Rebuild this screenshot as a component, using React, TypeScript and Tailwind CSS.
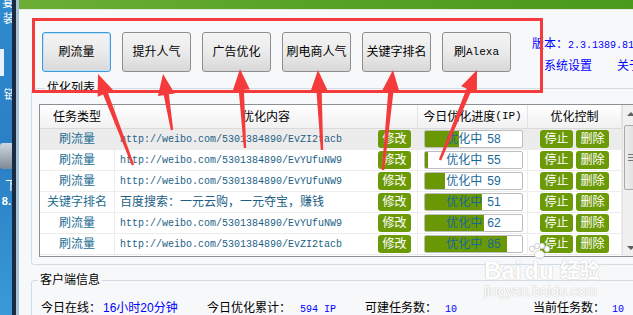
import React from 'react';

type Row = {
    type: string;
    content: string;
    url: boolean;
    fill: number;
    val: number;
    sel?: boolean;
};

const rows: Row[] = [
    { type: '刷流量', content: 'http://weibo.com/5301384890/EvZI2tacb', url: true, fill: 34, val: 58, sel: true },
    { type: '刷流量', content: 'http://weibo.com/5301384890/EvYUfuNW9', url: true, fill: 3, val: 55 },
    { type: '刷流量', content: 'http://weibo.com/5301384890/EvYUfuNW9', url: true, fill: 20, val: 59 },
    { type: '关键字排名', content: '百度搜索：一元云购，一元夺宝，赚钱', url: false, fill: 57, val: 51 },
    { type: '刷流量', content: 'http://weibo.com/5301384890/EvYUfuNW9', url: true, fill: 59, val: 62 },
    { type: '刷流量', content: 'http://weibo.com/5301384890/EvZI2tacb', url: true, fill: 82, val: 85 },
];

const buttons = ['刷流量', '提升人气', '广告优化', '刷电商人气', '关键字排名'];

// tail x,y -> tip x,y
const arrows = [
    [133, 165, 98, 74],
    [172, 130, 163, 74],
    [245, 148, 240, 69],
    [322, 150, 318, 70],
    [383, 170, 393, 70],
    [440, 160, 477, 70],
];

function arrowPoints(x1: number, y1: number, x2: number, y2: number) {
    const len = Math.hypot(x2 - x1, y2 - y1);
    const dx = (x2 - x1) / len;
    const dy = (y2 - y1) / len;
    const nx = -dy;
    const ny = dx;
    const bx = x2 - dx * 21;
    const by = y2 - dy * 21;
    const p = (x: number, y: number, w: number) => `${x + nx * w},${y + ny * w}`;
    return [
        p(x1, y1, 1.2),
        p(bx, by, 2.6),
        p(bx, by, 8.5),
        `${x2},${y2}`,
        p(bx, by, -8.5),
        p(bx, by, -2.6),
        p(x1, y1, -1.2),
    ].join(' ');
}

function GreenBtn({ label }: { label: string }) {
    return (
        <div className="w-[33px] h-[18px] rounded-[3px] bg-[#6c9a06] text-white text-[12px] leading-[18px] text-center">
            {label}
        </div>
    );
}

export default function App() {
    return (
        <div className="relative w-[633px] h-[315px] overflow-hidden flex bg-[#f7f8f9] text-black font-['Liberation_Sans','Noto_Sans_CJK_SC',sans-serif]">
            {/* desktop strip */}
            <div className="w-[19px] shrink-0 flex">
                <div className="relative w-[12px] bg-linear-to-b from-[#2f8ad0] via-[#2a7fc4] to-[#3a9ad8] overflow-hidden text-white text-[12px] leading-[14px]">
                    <span className="absolute right-[-2px] top-[-4px]">宴</span>
                    <span className="absolute right-[-3px] top-[12px]">装</span>
                    <div className="absolute left-0 top-[49px] w-[4px] h-[27px] bg-[#e8f2fa]" />
                    <span className="absolute right-[-4px] top-[88px]">链</span>
                    <div className="absolute left-0 top-[143px] w-[12px] h-[26px] bg-linear-to-b from-[#cfd8e0] to-[#7e8a96] rounded-l-[3px]" />
                    <span className="absolute right-[-5px] top-[179px]">下</span>
                    <span className="absolute right-[1px] top-[194px] text-[11px] font-bold">8.</span>
                </div>
                <div className="w-[4px] bg-[#182b42]" />
                <div className="w-[3px] bg-[#a8c2d8]" />
            </div>

            {/* app window */}
            <div className="flex-1 flex flex-col min-w-0">
                <div className="shrink-0 h-[9px] bg-linear-to-r from-[#6cae36] via-[#55a226] to-[#4a9a1c]" />
                <div className="shrink-0 h-[1px] bg-[#e4e9e1]" />

                {/* toolbar */}
                <div className="shrink-0 h-[70px] flex items-start pt-[22px] pl-[23px]">
                    <div className="flex gap-[11px]">
                        {buttons.map((b, i) => (
                            <div
                                key={i}
                                className={`w-[69px] h-[40px] rounded-[3px] border flex items-center justify-center text-[12px] bg-linear-to-b from-[#f4f4f4] via-[#ebebeb] to-[#d8d8d8] ${i === 0 ? 'border-[#3c9bd8] shadow-[inset_0_0_0_1px_#bfe2f6]' : 'border-[#8e8e8e]'}`}
                            >
                                {b}
                            </div>
                        ))}
                        <div className="w-[69px] h-[40px] rounded-[3px] border border-[#8e8e8e] flex items-center justify-center text-[12px] bg-linear-to-b from-[#f4f4f4] via-[#ebebeb] to-[#d8d8d8]">
                            刷<span className="font-['Liberation_Mono',monospace] text-[11px]">Alexa</span>
                        </div>
                    </div>
                    <div className="ml-[21px] mt-[5px] text-[#0000ff] whitespace-nowrap">
                        <div className="text-[12px] leading-[14px]">
                            版本：<span className="font-['Liberation_Mono',monospace] text-[10px]">2.3.1389.81</span>
                        </div>
                        <div className="mt-[6px] pl-[12px] text-[12px] leading-[14px] flex gap-[25px]">
                            <span>系统设置</span>
                            <span>关于</span>
                        </div>
                    </div>
                </div>

                {/* task list group */}
                <fieldset className="shrink-0 ml-[12px] mr-[-30px] border border-[#d4dce3] rounded-[3px] pl-[7px] pt-[8px] pb-[7px]">
                    <legend className="ml-[6px] px-[2px] text-[12px] leading-[16px]">优化列表</legend>
                    <div className="flex border border-[#8c8f93] bg-white w-[602px]">
                        <div className="flex flex-col">
                            <div className="flex h-[24px] border-b border-[#dadada] bg-linear-to-b from-white to-[#f1f1f1] text-[12px]">
                                <div className="w-[75px] border-r border-[#e2e2e2] flex items-center justify-center">任务类型</div>
                                <div className="w-[303px] border-r border-[#e2e2e2] flex items-center justify-center">优化内容</div>
                                <div className="w-[110px] border-r border-[#e2e2e2] flex items-center justify-center">
                                    今日优化进度<span className="font-['Liberation_Mono',monospace] text-[11px]">(IP)</span>
                                </div>
                                <div className="w-[94px] border-r border-[#e2e2e2] flex items-center justify-center">优化控制</div>
                            </div>
                            {rows.map((r, i) => (
                                <div key={i} className={`flex h-[21px] border-b border-[#ececec] ${r.sel ? 'bg-[#ececec]' : 'bg-white'}`}>
                                    <div className="w-[75px] border-r border-[#ececec] flex items-center justify-center text-[12px] text-[#1c6c93]">
                                        {r.type}
                                    </div>
                                    <div className="w-[303px] border-r border-[#ececec] flex items-center pl-[5px] pr-[6px]">
                                        <span className={`flex-1 whitespace-nowrap text-[#1d5f86] ${r.url ? "font-['Liberation_Mono',monospace] text-[10px]" : 'text-[12px]'}`}>
                                            {r.content}
                                        </span>
                                        <GreenBtn label="修改" />
                                    </div>
                                    <div className="w-[110px] border-r border-[#ececec] flex items-center pl-[6px]">
                                        <div className="relative w-[99px] h-[18px] border border-[#bdbdbd] rounded-[2px] bg-white overflow-hidden">
                                            <div className="h-full bg-[#6a9804]" style={{ width: r.fill }} />
                                            <div className="absolute inset-0 flex items-center justify-center gap-[5px] text-[12px] text-[#17689a]">
                                                <span>优化中</span>
                                                <span>{r.val}</span>
                                            </div>
                                        </div>
                                    </div>
                                    <div className="w-[94px] border-r border-[#ececec] flex items-center justify-center gap-[3px]">
                                        <GreenBtn label="停止" />
                                        <GreenBtn label="删除" />
                                    </div>
                                </div>
                            ))}
                            <div className="h-[1px]" />
                        </div>
                        {/* scrollbar */}
                        <div className="w-[17px] bg-[#f0f0f0] border-l border-[#e3e3e3] flex flex-col justify-between items-center">
                            <div className="w-full">
                                <div className="h-[17px] flex items-center justify-center">
                                    <div className="w-0 h-0 border-l-[4px] border-r-[4px] border-b-[4px] border-l-transparent border-r-transparent border-b-[#606060]" />
                                </div>
                                <div className="mt-[3px] mx-[1px] h-[65px] rounded-[2px] border border-[#a9a9a9] bg-linear-to-r from-[#eeeeee] to-[#dcdcdc] flex flex-col items-center justify-center gap-[2px]">
                                    <div className="w-[7px] h-[1px] bg-[#777]" />
                                    <div className="w-[7px] h-[1px] bg-[#777]" />
                                    <div className="w-[7px] h-[1px] bg-[#777]" />
                                </div>
                            </div>
                            <div className="h-[17px] flex items-center justify-center">
                                <div className="w-0 h-0 border-l-[4px] border-r-[4px] border-t-[4px] border-l-transparent border-r-transparent border-t-[#606060]" />
                            </div>
                        </div>
                    </div>
                </fieldset>

                {/* client info group */}
                <fieldset className="shrink-0 mt-[7px] ml-[12px] mr-[-30px] h-[60px] border border-[#d4dce3] rounded-[3px]">
                    <legend className="ml-[6px] px-[2px] text-[12px] leading-[16px]">客户端信息</legend>
                    <div className="flex pt-[12px] pl-[9px] text-[12px] leading-[16px] whitespace-nowrap">
                        <div className="w-[166px]">
                            今日在线：<span className="ml-[2px] text-[#0000ff]">16小时20分钟</span>
                        </div>
                        <div className="w-[158px]">
                            今日优化累计：<span className="ml-[9px] text-[#0000ff] font-['Liberation_Mono',monospace] text-[10px]">594 IP</span>
                        </div>
                        <div className="w-[168px]">
                            可建任务数：<span className="ml-[8px] text-[#0000ff] font-['Liberation_Mono',monospace] text-[10px]">10</span>
                        </div>
                        <div>
                            当前任务数：<span className="ml-[7px] text-[#0000ff] font-['Liberation_Mono',monospace] text-[10px]">10</span>
                        </div>
                    </div>
                </fieldset>
            </div>

            {/* watermark */}
            <div className="absolute left-[484px] top-[243px] text-white [text-shadow:0_0_1px_#c6c6c6,0_0_1px_#c6c6c6] pointer-events-none">
                <svg className="ml-[42px]" width="26" height="16" viewBox="0 0 26 16">
                    <g fill="#ffffff" stroke="#cfcfcf" strokeWidth="1">
                        <ellipse cx="6" cy="6" rx="2.5" ry="3" />
                        <ellipse cx="11" cy="3" rx="2.5" ry="2.8" />
                        <ellipse cx="16" cy="3" rx="2.5" ry="2.8" />
                        <ellipse cx="21" cy="6" rx="2.5" ry="3" />
                        <ellipse cx="13.5" cy="11.5" rx="5" ry="4" />
                    </g>
                </svg>
                <div className="flex items-end font-bold text-[24px] leading-[24px]">
                    <span>Bai</span>
                    <span className="ml-[3px]">du</span>
                    <span className="ml-[6px] text-[20px]">经验</span>
                </div>
                <div className="mt-[1px] text-[14px] leading-[14px]">jingyan.baidu.com</div>
            </div>

            {/* annotation overlay */}
            <svg className="absolute inset-0 pointer-events-none" width="633" height="315">
                <rect x="33.5" y="19.5" width="508" height="72" fill="none" stroke="#f43a3a" strokeWidth="3" />
                {arrows.map((a, i) => (
                    <polygon key={i} points={arrowPoints(a[0], a[1], a[2], a[3])} fill="#f43a3a" />
                ))}
            </svg>
        </div>
    );
}
